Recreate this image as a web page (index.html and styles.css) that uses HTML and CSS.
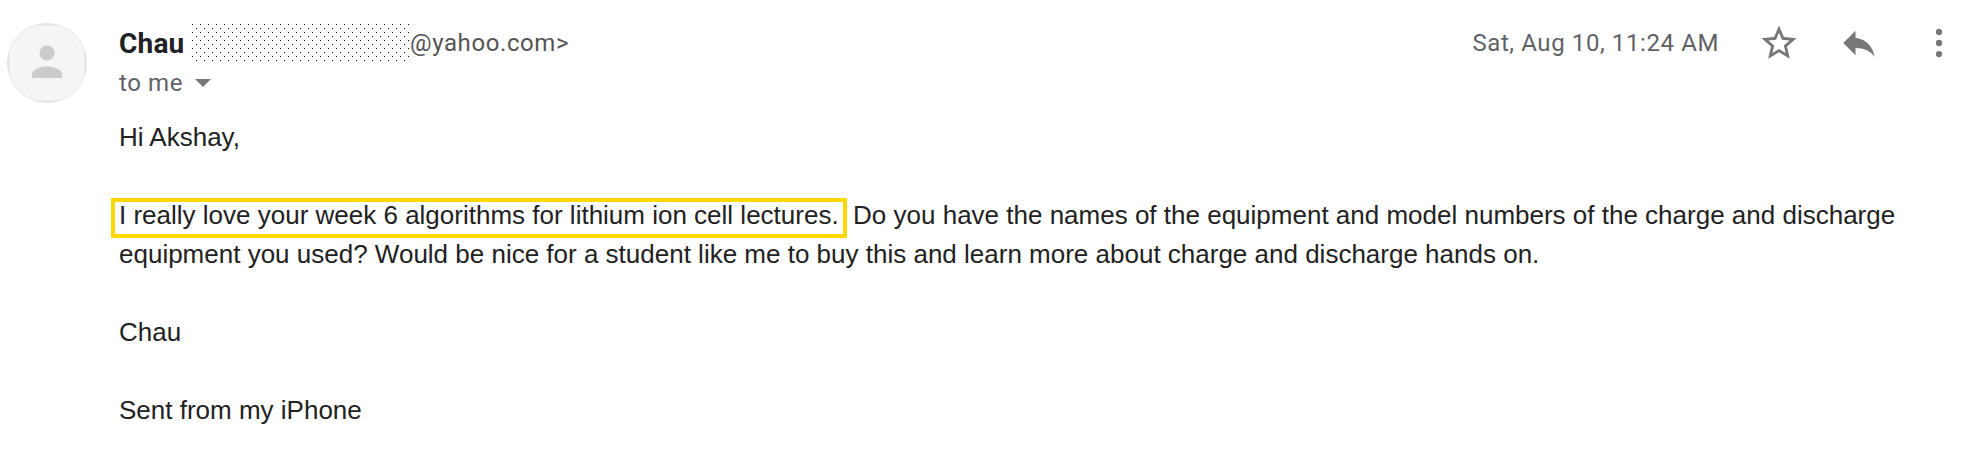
FILE: index.html
```html
<!DOCTYPE html>
<html lang="en">
<head>
    <meta charset="UTF-8">
    <meta name="viewport" content="width=device-width, initial-scale=1.0">
    <title>Message</title>
    <link rel="stylesheet" href="styles.css">
</head>
<body>
    <div class="message">
        <svg class="avatar" viewBox="0 0 80 80">
            <clipPath id="round"><circle cx="40" cy="40" r="39.3"/></clipPath>
            <circle cx="40" cy="40" r="40" fill="#e2e2e2"/>
            <rect x="2.5" y="2.5" width="75" height="75" fill="#f5f5f5" clip-path="url(#round)"/>
            <circle cx="40" cy="30" r="7.6" fill="#ccc"/>
            <path d="M25 55v-4c0-5 10-7.500 15-7.500s15 2.500 15 7.500v4z" fill="#ccc"/>
        </svg>

        <div class="content">
            <div class="header">
                <span class="name">Chau</span>
                <span class="redacted"></span>
                <span class="email">@yahoo.com&gt;</span>
                <span class="date">Sat, Aug 10, 11:24 AM</span>
                <svg class="icon star" viewBox="0 0 24 24"><path d="M22 9.240l-7.190-.62L12 2 9.190 8.630 2 9.240l5.460 4.730L5.820 21 12 17.270 18.180 21l-1.630-7.030L22 9.240zM12 15.400l-3.760 2.270 1-4.280-3.320-2.880 4.380-.38L12 6.100l1.710 4.040 4.380.38-3.320 2.880 1 4.280L12 15.400z"/></svg>
                <svg class="icon reply" viewBox="0 0 24 24"><path d="M10 9V5l-7 7 7 7v-4.100c5 0 8.500 1.600 11 5.100-1-5-4-10-11-11z"/></svg>
                <svg class="icon more" viewBox="0 0 24 24"><circle cx="12" cy="5.700" r="1.800"/><circle cx="12" cy="12" r="1.800"/><circle cx="12" cy="18.300" r="1.800"/></svg>
            </div>

            <div class="recipient">
                <span>to me</span>
                <svg class="arrow" viewBox="0 0 16 8"><path d="M0 0h16l-8 8z"/></svg>
            </div>

            <div class="body">
                <p>Hi Akshay,</p>
                <p><span class="highlight">I really love your week 6 algorithms for lithium ion cell lectures.</span>&nbsp; Do you have the names of the equipment and model numbers of the charge and discharge<br>equipment you used? Would be nice for a student like me to buy this and learn more about charge and discharge hands on.</p>
                <p>Chau</p>
                <p>Sent from my iPhone</p>
            </div>
        </div>
    </div>
</body>
</html>
```
FILE: styles.css
```css
body {
    margin: 0;
    background-color: #fff;
    color: #222;
    font-family: "Liberation Sans", Arial, sans-serif;
}

.message {
    display: flex;
    gap: 32px;
    padding: 23px 0 0 7px;
}

.avatar {
    width: 80px;
    height: 80px;
    flex-shrink: 0;
}

.content {
    flex: 1;
}

.header {
    display: flex;
    align-items: center;
    height: 40px;
    font-family: Roboto, sans-serif;
    font-size: 24px;
    letter-spacing: 0.6px;
    color: #5f6368;
}

.name {
    width: 73px;
    font-size: 28px;
    font-weight: bold;
    letter-spacing: 0.2px;
    color: #202124;
}

/* staggered single pixel dots */
.redacted {
    width: 218px;
    height: 37px;
    margin-bottom: 1px;
    background-image:
        conic-gradient(from 270deg at 1px 1px, #000 90deg, transparent 0),
        conic-gradient(from 270deg at 1px 1px, #000 90deg, transparent 0);
    background-size: 8px 8px;
    background-position: 0 0, 4px 4px;
}

.email {
    color: #555;
}

.date {
    margin-left: auto;
}

.icon {
    width: 42px;
    height: 42px;
    fill: #777;
    flex-shrink: 0;
}

.star {
    margin-left: 39px;
}

.reply {
    margin-left: 38px;
}

.more {
    margin: 0 14px 0 38px;
}

.recipient {
    display: flex;
    align-items: center;
    gap: 12px;
    height: 40px;
    font-family: Roboto, sans-serif;
    font-size: 24px;
    letter-spacing: 0.6px;
    color: #5f6368;
}

.arrow {
    width: 16px;
    height: 8px;
    fill: #777;
}

.body {
    margin-top: 15px;
    font-size: 26px;
    line-height: 39px;
    white-space: nowrap;
}

.body p {
    margin: 0 0 39px;
}

.body p:last-child {
    margin-bottom: 0;
}

.highlight {
    display: inline-block;
    height: 32px;
    margin: -4px -8px -8px;
    padding: 0 4px;
    border: 4px solid #ffd800;
    line-height: 27px;
}
```
